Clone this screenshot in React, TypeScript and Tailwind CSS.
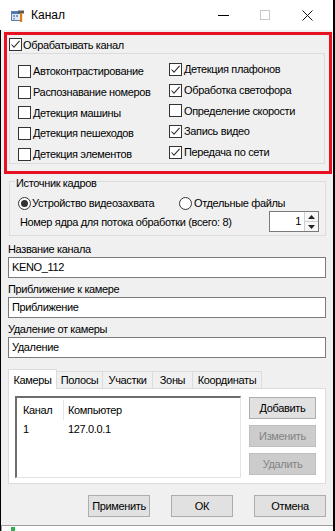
import React from "react";

function CheckBox({ checked }: { checked?: boolean }) {
  return (
    <span className="w-[13px] h-[13px] border border-[#333333] bg-white flex items-center justify-center shrink-0">
      {checked && (
        <svg width="11" height="11" viewBox="0 0 11 11">
          <path d="M1.5 5.5 L4 8.2 L9.6 1.8" stroke="#333333" strokeWidth="1.1" fill="none" />
        </svg>
      )}
    </span>
  );
}

function Radio({ checked }: { checked?: boolean }) {
  return (
    <span className="w-[13px] h-[13px] rounded-full border border-[#333333] bg-white flex items-center justify-center shrink-0">
      {checked && <span className="w-[7px] h-[7px] rounded-full bg-[#333333]" />}
    </span>
  );
}

function CheckRow({ label, checked }: { label: string; checked?: boolean }) {
  return (
    <div className="h-[20.7px] flex items-center gap-[2px]">
      <CheckBox checked={checked} />
      <span className="leading-[16px]">{label}</span>
    </div>
  );
}

function Btn({ label, w, disabled }: { label: string; w: string; disabled?: boolean }) {
  return (
    <div
      className={
        disabled
          ? `${w} h-[22px] bg-[#cccccc] border border-[#bfbfbf] text-[#838383] flex items-center justify-center`
          : `${w} h-[22px] bg-[#e1e1e1] border border-[#adadad] flex items-center justify-center`
      }
    >
      {label}
    </div>
  );
}

function AppIcon() {
  return (
    <svg width="13" height="12" viewBox="0 0 13 12">
      <rect x="0.5" y="1.5" width="9" height="9" fill="#dfe8f3" stroke="#5a7fa8" />
      <rect x="1" y="2" width="8" height="2" fill="#4a78b8" />
      <rect x="2" y="5" width="2" height="2" fill="#7f9cc4" />
      <rect x="5" y="5" width="2" height="2" fill="#7f9cc4" />
      <rect x="2" y="8" width="2" height="1.5" fill="#7f9cc4" />
      <rect x="7" y="0.5" width="6" height="3" fill="#5b5b5b" />
      <rect x="9" y="3" width="2.2" height="9" fill="#e07b12" />
    </svg>
  );
}

export default function App() {
  const left = [
    "Автоконтрастирование",
    "Распознавание номеров",
    "Детекция машины",
    "Детекция пешеходов",
    "Детекция элементов",
  ];
  const right: [string, boolean][] = [
    ["Детекция плафонов", true],
    ["Обработка светофора", true],
    ["Определение скорости", false],
    ["Запись видео", true],
    ["Передача по сети", true],
  ];
  const tabs = [
    ["Полосы", "w-[46px]"],
    ["Участки", "w-[50px]"],
    ["Зоны", "w-[40px]"],
    ["Координаты", "w-[69px]"],
  ];

  return (
    <div className="w-[335px] h-[531px] bg-black overflow-hidden whitespace-nowrap font-['Liberation_Sans',Arial,sans-serif] text-[11px] tracking-[-0.35px] text-black">
      <div className="w-[333px] h-[531px] flex flex-col">
        {/* title bar */}
        <div className="h-[30px] bg-white flex items-center shrink-0">
          <div className="ml-[11px] mt-[1px]">
            <AppIcon />
          </div>
          <span className="ml-[7px] text-[12px] tracking-normal leading-[16px]">Канал</span>
          <div className="ml-auto flex items-center h-full">
            <div className="w-[46px] h-full flex items-center justify-center">
              <span className="w-[11px] h-[1px] bg-black" />
            </div>
            <div className="w-[38px] h-full flex items-center justify-center">
              <span className="w-[10px] h-[10px] border border-[#c8c8c8]" />
            </div>
            <div className="w-[46px] h-full flex items-center justify-center">
              <svg width="11" height="11" viewBox="0 0 11 11">
                <path d="M0.5 0.5 L10.5 10.5 M10.5 0.5 L0.5 10.5" stroke="#111" strokeWidth="1" />
              </svg>
            </div>
            <div className="w-[3px]" />
          </div>
        </div>

        {/* body */}
        <div className="h-[495px] ml-[1px] bg-[#f0f0f0] flex flex-col shrink-0">
          {/* red highlighted area */}
          <div className="mt-[2px] ml-[3px] w-[328px] h-[142px] border-[3px] border-[#e81123] flex flex-col">
            <div className="pl-[2px] pt-[3px] flex items-center gap-[1px] h-[16px]">
              <CheckBox checked />
              <span className="leading-[16px]">Обрабатывать канал</span>
            </div>
            <div className="mt-[2px] ml-[2px] w-[316px] h-[111px] border border-[#dcdcdc] grid grid-cols-[159px_1fr]">
              <div className="pl-[8px] pt-[7px] flex flex-col">
                {left.map((l) => (
                  <CheckRow key={l} label={l} />
                ))}
              </div>
              <div className="pt-[5px] flex flex-col">
                {right.map(([l, c]) => (
                  <CheckRow key={l} label={l} checked={c} />
                ))}
              </div>
            </div>
          </div>

          {/* frame source */}
          <fieldset className="mt-[-1px] ml-[8px] w-[317px] border border-[#dcdcdc] pb-[3px]">
            <legend className="ml-[5px] px-[1px] pt-[4px] leading-[12px]">Источник кадров</legend>
            <div className="pt-[7px] pl-[8px] h-[21px] flex items-center">
              <div className="flex items-center gap-[1px] w-[161px]">
                <Radio checked />
                <span className="leading-[16px]">Устройство видеозахвата</span>
              </div>
              <div className="flex items-center gap-[2px]">
                <Radio />
                <span className="leading-[16px]">Отдельные файлы</span>
              </div>
            </div>
            <div className="mt-[1px] pl-[10px] pr-[6px] h-[21px] flex items-center justify-between">
              <span className="leading-[16px]">Номер ядра для потока обработки (всего: 8)</span>
              <div className="w-[50px] h-[21px] border border-[#7a7a7a] bg-white flex">
                <span className="flex-1 text-right pr-[3px] leading-[19px]">1</span>
                <div className="w-[14px] border-l border-[#cfcfcf] flex flex-col">
                  <div className="flex-1 flex items-center justify-center border-b border-[#cfcfcf] bg-[#f7f7f7]">
                    <svg width="7" height="4" viewBox="0 0 7 4">
                      <path d="M0 4 L3.5 0 L7 4 Z" fill="#222" />
                    </svg>
                  </div>
                  <div className="flex-1 flex items-center justify-center bg-[#f7f7f7]">
                    <svg width="7" height="4" viewBox="0 0 7 4">
                      <path d="M0 0 L3.5 4 L7 0 Z" fill="#222" />
                    </svg>
                  </div>
                </div>
              </div>
            </div>
          </fieldset>

          {/* text fields */}
          <div className="mt-[5px] ml-[7px] leading-[16px]">Название канала</div>
          <div className="ml-[7px] w-[318px] h-[21px] border border-[#7a7a7a] bg-white pl-[3px] leading-[19px]">KENO_112</div>
          <div className="mt-[3px] ml-[7px] leading-[16px]">Приближение к камере</div>
          <div className="ml-[7px] w-[318px] h-[21px] border border-[#7a7a7a] bg-white pl-[3px] leading-[19px]">Приближение</div>
          <div className="mt-[3px] ml-[7px] leading-[16px]">Удаление от камеры</div>
          <div className="ml-[7px] w-[318px] h-[21px] border border-[#7a7a7a] bg-white pl-[3px] leading-[19px]">Удаление</div>

          {/* tabs */}
          <div className="mt-[11px] ml-[7px] flex items-end h-[20px] relative z-10">
            <div className="w-[49px] h-[20px] bg-white border border-b-0 border-[#dcdcdc] flex items-center justify-center leading-[16px]">
              Камеры
            </div>
            {tabs.map(([t, w]) => (
              <div
                key={t}
                className={`${w} h-[17px] bg-[#f0f0f0] border border-l-0 border-b-0 border-[#dcdcdc] flex items-center justify-center leading-[16px] mb-[1px]`}
              >
                {t}
              </div>
            ))}
          </div>
          <div className="mt-[-1px] ml-[7px] w-[318px] h-[96px] bg-white border border-[#dcdcdc] flex pt-[7px] pl-[6px]">
            <div className="w-[226px] h-[82px] border-t-2 border-l-2 border-t-[#6d6d6d] border-l-[#6d6d6d] border-r border-b border-r-[#e3e3e3] border-b-[#e3e3e3] bg-white flex flex-col">
              <div className="h-[22px] flex items-center pt-[2px]">
                <span className="w-[46px] pl-[6px] leading-[16px]">Канал</span>
                <span className="w-[1px] h-[20px] bg-[#e5e5e5]" />
                <span className="pl-[4px] leading-[16px]">Компьютер</span>
              </div>
              <div className="h-[18px] flex items-center">
                <span className="w-[47px] pl-[6px] leading-[16px]">1</span>
                <span className="pl-[4px] leading-[16px]">127.0.0.1</span>
              </div>
            </div>
            <div className="ml-[8px] flex flex-col gap-[6px] pt-[1px]">
              <Btn label="Добавить" w="w-[67px]" />
              <Btn label="Изменить" w="w-[67px]" disabled />
              <Btn label="Удалить" w="w-[67px]" disabled />
            </div>
          </div>

          {/* dialog buttons */}
          <div className="mt-[11px] flex justify-end pr-[7px] gap-[21px]">
            <Btn label="Применить" w="w-[62px]" />
            <Btn label="ОК" w="w-[62px]" />
            <Btn label="Отмена" w="w-[72px]" />
          </div>
        </div>

        {/* window behind */}
        <div className="h-[6px] ml-[1px] bg-white border-t border-l border-[#a0a0a0] flex shrink-0">
          <span className="ml-[9px] mt-[1px] w-[4px] h-[4px] bg-[#2bb24c]" />
        </div>
      </div>
    </div>
  );
}
